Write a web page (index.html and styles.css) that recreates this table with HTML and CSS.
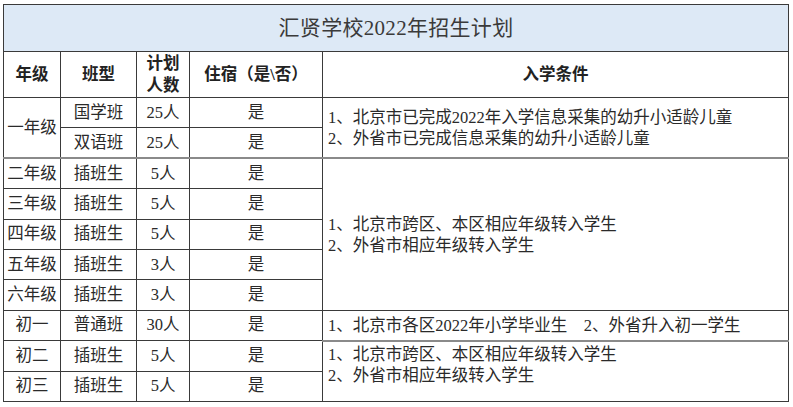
FILE: index.html
```html
<!DOCTYPE html>
<html lang="zh">
<head>
<meta charset="utf-8">
<title>汇贤学校2022年招生计划</title>
<link rel="stylesheet" href="styles.css">
</head>
<body>
<table class="plan">
  <colgroup>
    <col class="c-grade"><col class="c-type"><col class="c-num"><col class="c-board"><col class="c-cond">
  </colgroup>
  <tr class="r-title"><td colspan="5" class="title">汇贤学校2022年招生计划</td></tr>
  <tr class="r-head">
    <th>年级</th><th>班型</th><th class="two">计划<br>人数</th><th>住宿（是\否）</th><th>入学条件</th>
  </tr>
  <tr class="r">
    <td rowspan="2" class="grade thick">一年级</td><td>国学班</td><td class="num">25人</td><td>是</td>
    <td rowspan="2" class="cond thick">1、北京市已完成2022年入学信息采集的幼升小适龄儿童<br>2、外省市已完成信息采集的幼升小适龄儿童</td>
  </tr>
  <tr class="r"><td class="thick">双语班</td><td class="num thick">25人</td><td class="thick">是</td></tr>
  <tr class="r">
    <td class="grade">二年级</td><td>插班生</td><td class="num">5人</td><td>是</td>
    <td rowspan="5" class="cond">1、北京市跨区、本区相应年级转入学生<br>2、外省市相应年级转入学生</td>
  </tr>
  <tr class="r"><td class="grade">三年级</td><td>插班生</td><td class="num">5人</td><td>是</td></tr>
  <tr class="r"><td class="grade">四年级</td><td>插班生</td><td class="num">5人</td><td>是</td></tr>
  <tr class="r"><td class="grade">五年级</td><td>插班生</td><td class="num">3人</td><td>是</td></tr>
  <tr class="r"><td class="grade">六年级</td><td>插班生</td><td class="num">3人</td><td>是</td></tr>
  <tr class="r">
    <td class="grade">初一</td><td>普通班</td><td class="num">30人</td><td>是</td>
    <td class="cond thick">1、北京市各区2022年小学毕业生&nbsp;&nbsp;&nbsp;&nbsp;2、外省升入初一学生</td>
  </tr>
  <tr class="r">
    <td class="grade">初二</td><td>插班生</td><td class="num">5人</td><td>是</td>
    <td rowspan="2" class="cond top">1、北京市跨区、本区相应年级转入学生<br>2、外省市相应年级转入学生</td>
  </tr>
  <tr class="r"><td class="grade">初三</td><td>插班生</td><td class="num">5人</td><td>是</td></tr>
</table>
</body>
</html>
```

FILE: styles.css
```css
html, body {
  margin: 0;
  padding: 0;
  background: #ffffff;
}

body {
  padding: 4px 0 0 3px;
  font-family: "Liberation Serif", "Noto Sans CJK SC", serif;
  color: #2a2a2a;
}

.plan {
  border-collapse: collapse;
  table-layout: fixed;
  width: 785px;
  border: 1.5px solid #3a3a3a;
}

.c-grade { width: 57px; }
.c-type { width: 76px; }
.c-num { width: 53px; }
.c-board { width: 133px; }
.c-cond { width: 466px; }

.plan td,
.plan th {
  border: 1px solid #3a3a3a;
  padding: 0;
  text-align: center;
  vertical-align: middle;
  font-size: 16.5px;
  line-height: 20px;
  white-space: nowrap;
  overflow: hidden;
}

.plan .r-title { height: 47px; }
.plan .title {
  background: #dde9f6;
  font-size: 21px;
  color: #3a3a3a;
  letter-spacing: 0.3px;
}

.plan .r-head { height: 46px; }
.plan th {
  font-weight: bold;
  font-size: 16.5px;
  color: #222;
}
.plan th.two {
  line-height: 22px;
}

.plan .r { height: 30.4px; }

.plan .cond {
  text-align: left;
  padding-left: 5px;
  line-height: 21px;
  font-size: 16.5px;
}

.plan .cond.top {
  vertical-align: top;
  padding-top: 2px;
}

.plan .thick {
  border-bottom: 2px solid #8a8a8a;
}
```
